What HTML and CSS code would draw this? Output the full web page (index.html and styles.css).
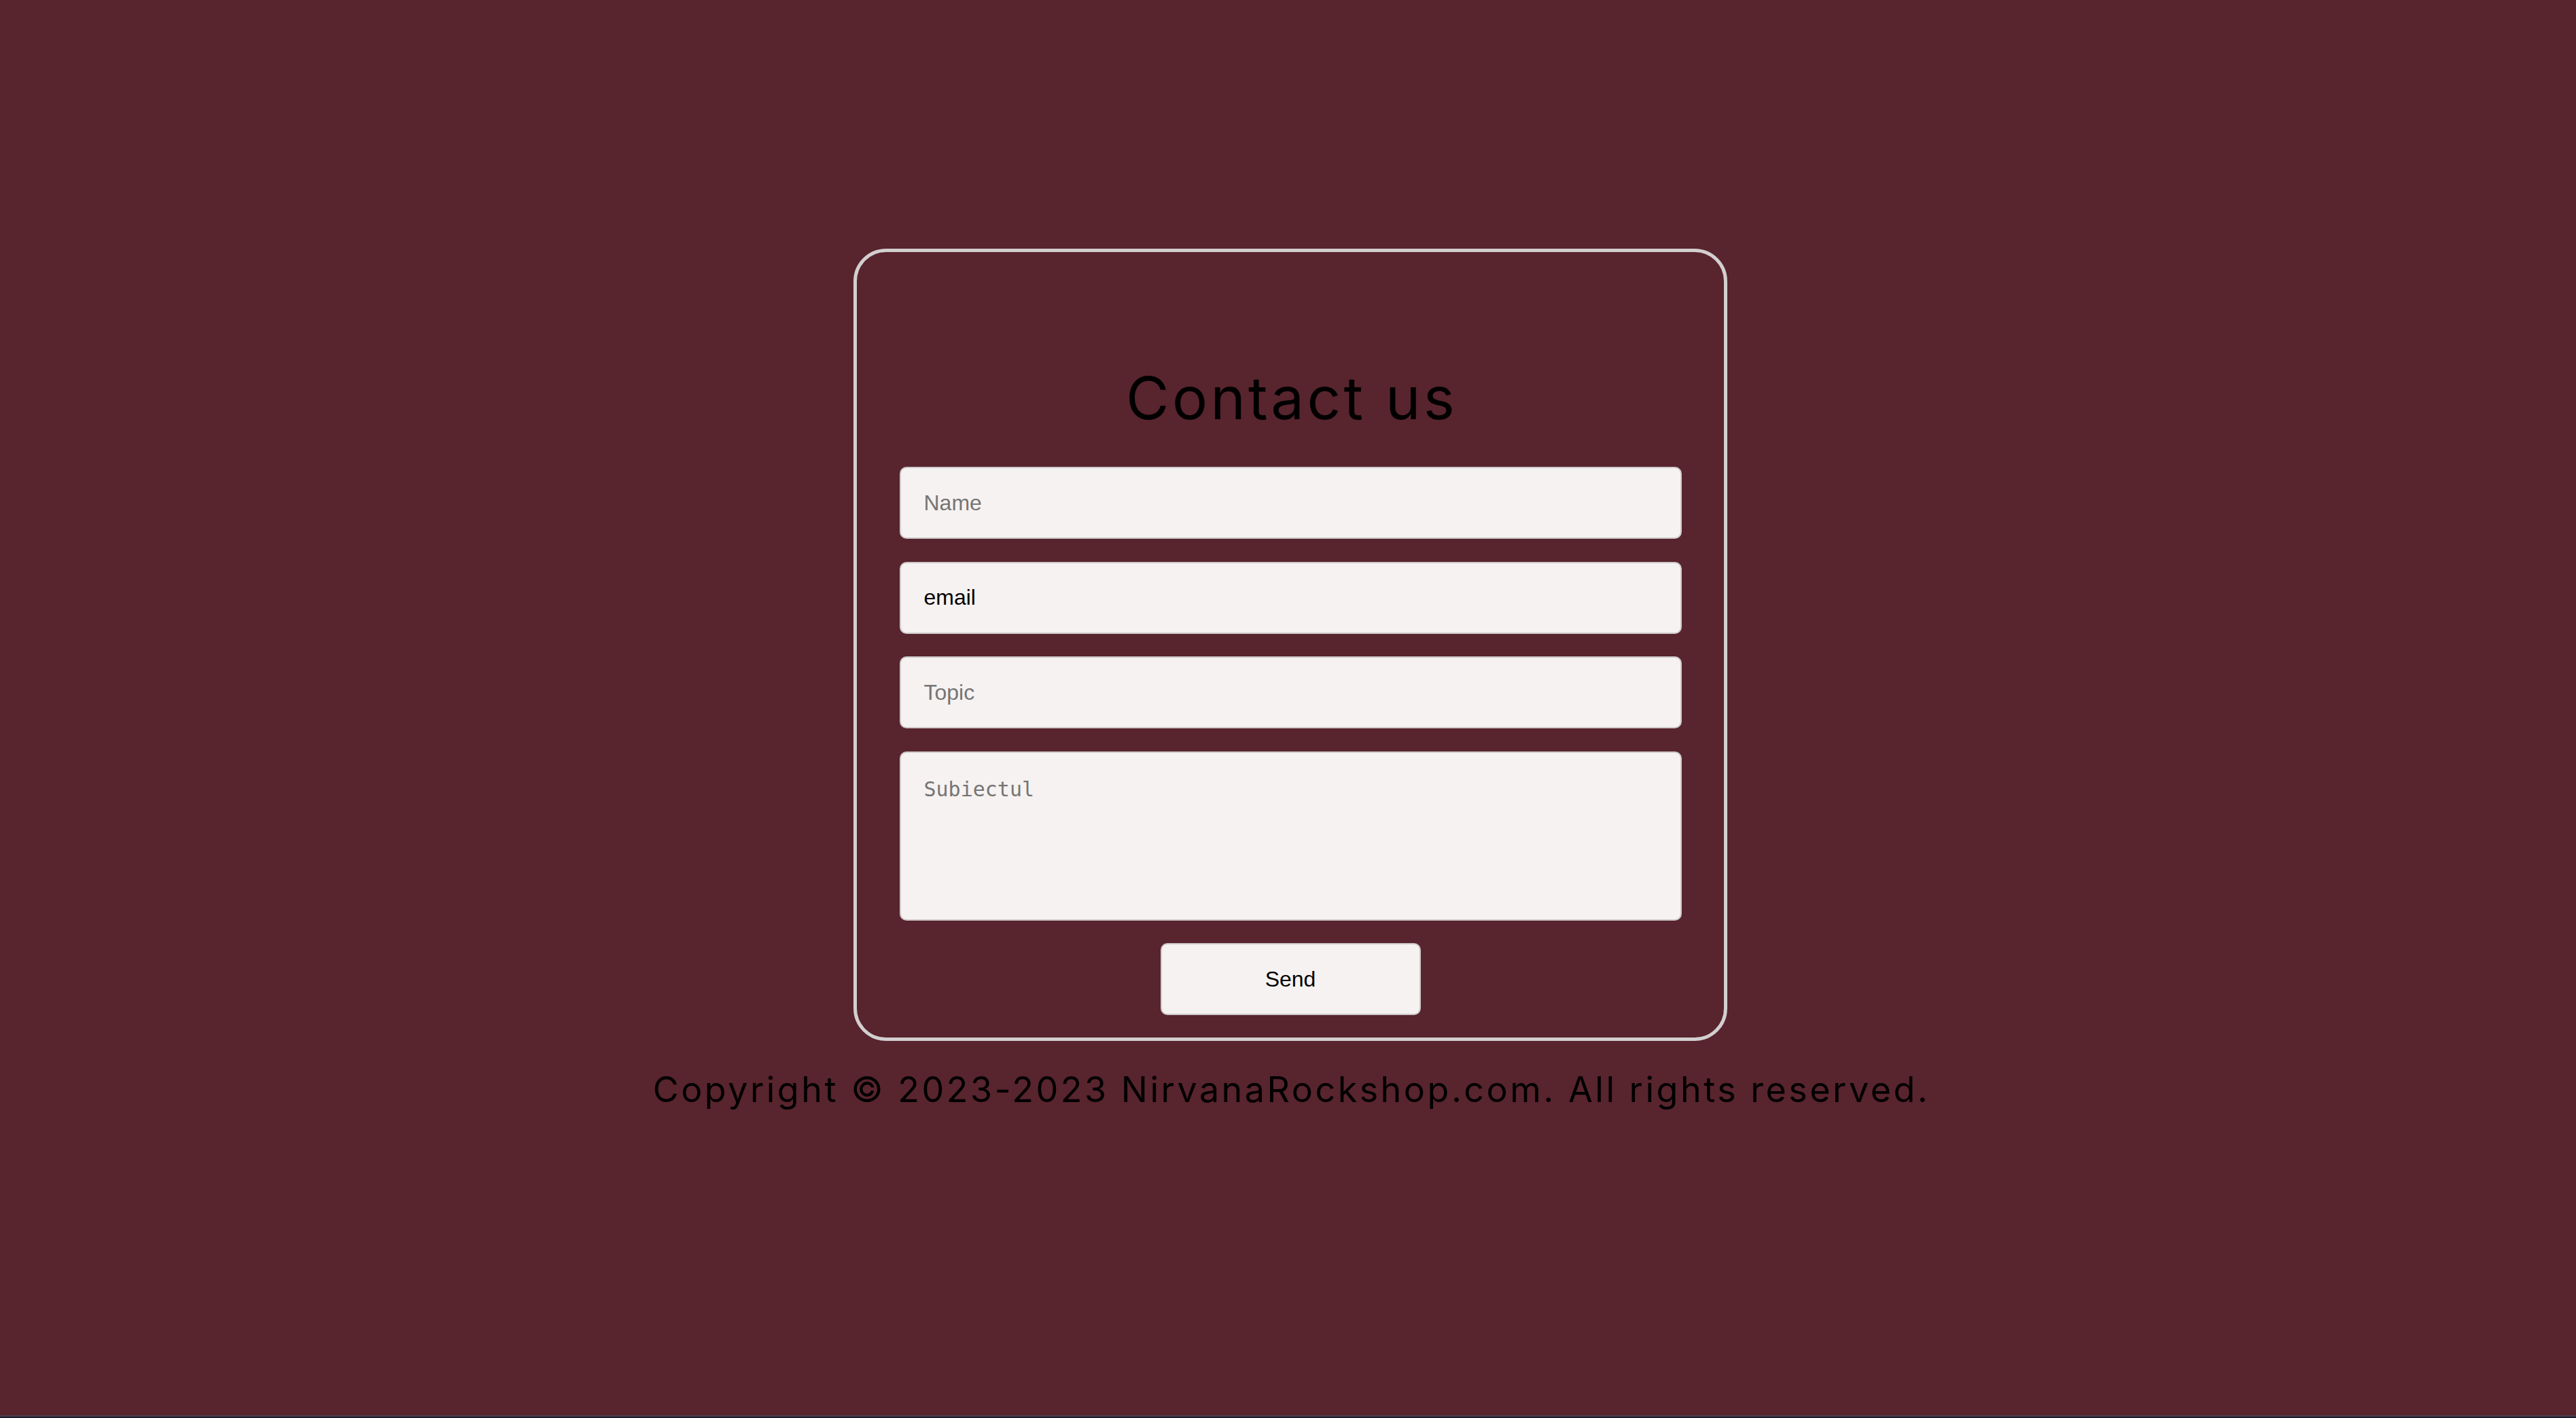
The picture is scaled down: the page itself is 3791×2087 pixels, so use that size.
FILE: index.html
```html
<!DOCTYPE html>
<html lang="en">
<head>
<meta charset="utf-8">
<title>Contact us</title>
<link rel="stylesheet" href="styles.css">
</head>
<body>
<div class="page">
  <div class="card">
    <h1 class="title">Contact us</h1>
    <form class="form">
      <input class="field" type="text" placeholder="Name">
      <input class="field field-filled" type="text" value="email">
      <input class="field" type="text" placeholder="Topic">
      <textarea class="area" placeholder="Subiectul"></textarea>
      <button class="send" type="button">Send</button>
    </form>
  </div>
  <p class="copy">Copyright © 2023-2023 NirvanaRockshop.com. All rights reserved.</p>
</div>
<div class="strip"></div>
</body>
</html>
```
FILE: styles.css
```css
html {
  background: #1e1a29;
}
body {
  margin: 0;
}
.page {
  height: 2083px;
  box-sizing: border-box;
  background: #58242d;
  padding: 366px 0 0 7px;
  display: flex;
  flex-direction: column;
  align-items: center;
}
.strip {
  height: 2px;
  background: #4a3f50;
}
.card {
  width: 1286px;
  height: 1166px;
  box-sizing: border-box;
  border: 5px solid #d2cfcf;
  border-radius: 48px;
  padding: 165px 0 33px;
  display: flex;
  flex-direction: column;
  align-items: center;
}
.title {
  margin: 0 0 51px;
  padding-left: 4px;
  font-family: Inter, "Noto Sans", sans-serif;
  font-weight: 400;
  font-size: 87px;
  line-height: 100px;
  letter-spacing: 4.3px;
  color: #000;
}
.form {
  width: 1151px;
  display: flex;
  flex-direction: column;
  align-items: center;
  gap: 33.5px;
}
.field,
.area,
.send {
  box-sizing: border-box;
  background: #f6f2f1;
  border: 2px solid #cdc9c9;
  border-radius: 10px;
  outline: none;
  margin: 0;
}
.field {
  width: 100%;
  height: 106px;
  padding: 0 34px;
  font-family: "Liberation Sans", Arial, sans-serif;
  font-size: 32px;
  color: #000;
}
.field::placeholder {
  color: #757575;
}
.area {
  width: 100%;
  height: 249px;
  padding: 36px 34px;
  resize: none;
  font-family: "DejaVu Sans Mono", monospace;
  font-size: 30px;
  color: #000;
}
.area::placeholder {
  color: #757575;
}
.send {
  width: 383px;
  height: 106px;
  font-family: "Liberation Sans", Arial, sans-serif;
  font-size: 32px;
  color: #000;
}
.copy {
  margin: 41px 0 0;
  padding-left: 3px;
  font-family: Inter, "Noto Sans", sans-serif;
  font-weight: 400;
  font-size: 52px;
  line-height: 62px;
  letter-spacing: 3.5px;
  color: #000;
  white-space: nowrap;
}
```
